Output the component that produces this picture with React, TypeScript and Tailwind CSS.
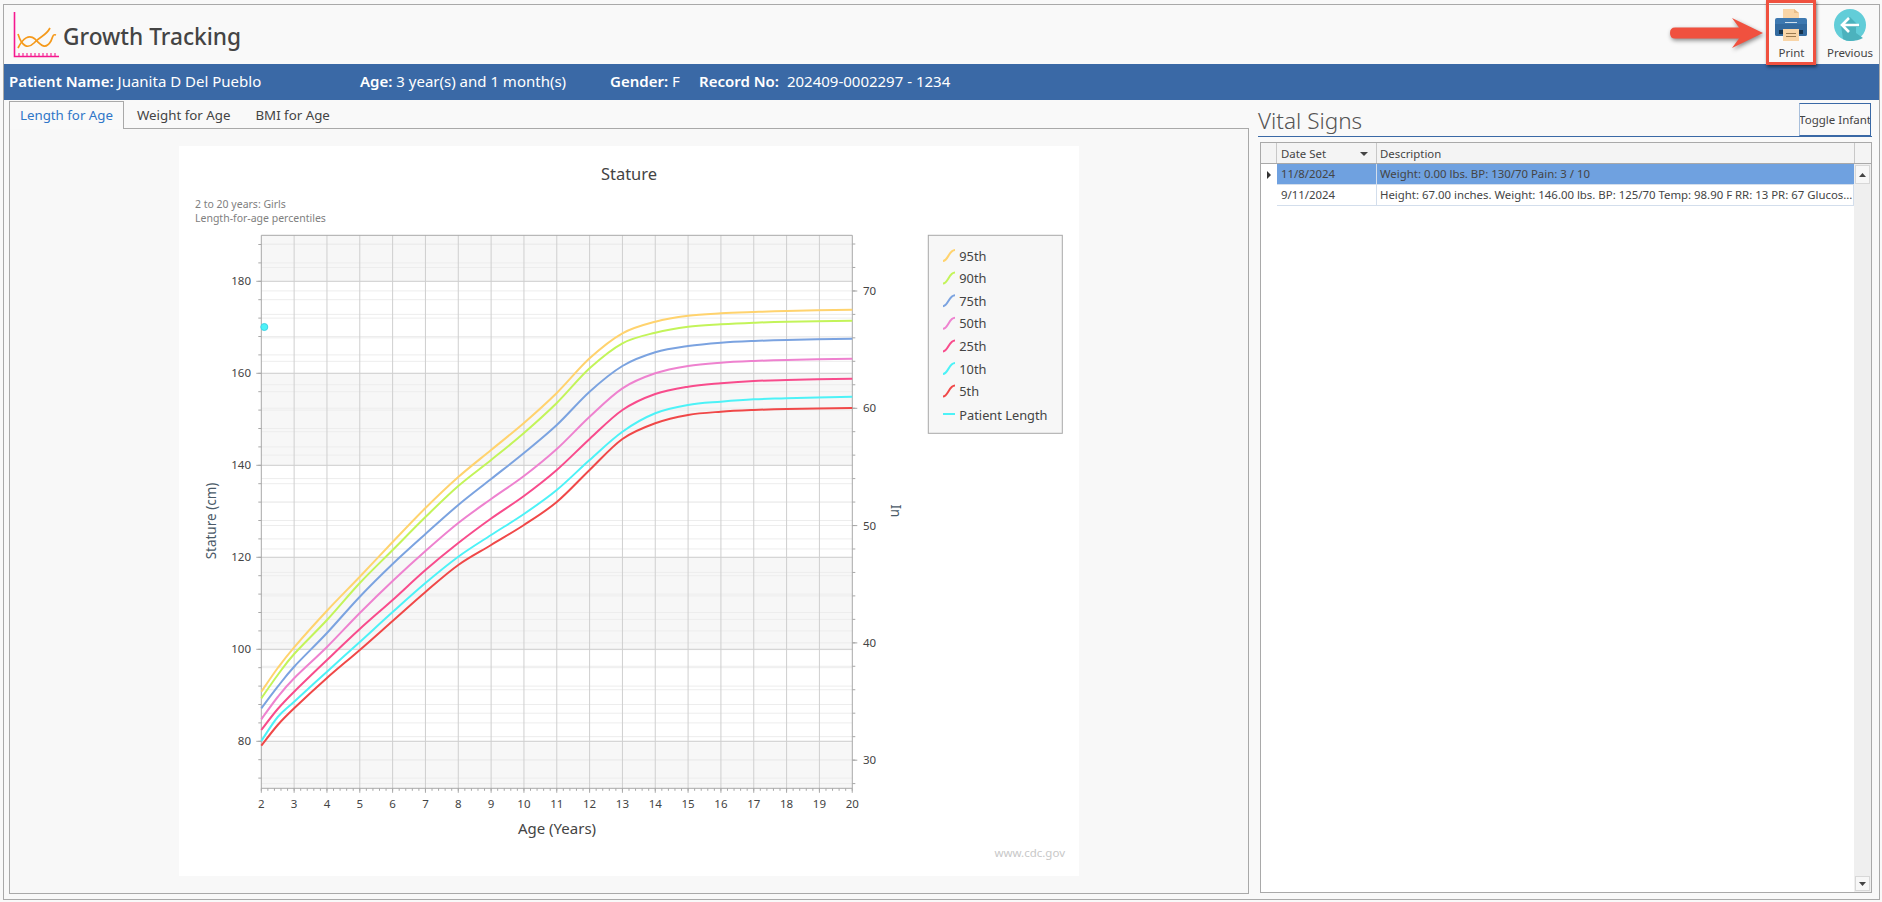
import React from "react";

const ages = [2, 2.5, 3, 4, 5, 6, 7, 8, 9, 10, 11, 12, 13, 14, 15, 16, 17, 18, 20];

const curves = [
  { name: "95th", color: "#ffd36e", ys: [691.7, 668, 647.3, 610.7, 576.7, 542, 508, 477, 450, 423, 393, 358.3, 333.3, 321.7, 315.7, 313.3, 312, 311, 309.7] },
  { name: "90th", color: "#c3f45a", ys: [698.3, 675, 654, 620, 583, 550, 517, 486, 460, 433, 403, 368.3, 343.3, 332.7, 326.7, 324.3, 322.7, 321.7, 320.7] },
  { name: "75th", color: "#7ba3e0", ys: [708.3, 686.7, 666.7, 633, 596.7, 564, 534, 505, 479, 453, 425, 391.7, 366, 352.3, 346, 342.7, 341, 340, 338.7] },
  { name: "50th", color: "#ee82cf", ys: [719.3, 697, 678.3, 647, 613, 581, 551, 523, 499, 476, 449, 416.7, 388.3, 373.3, 366, 362.7, 361, 360, 358.7] },
  { name: "25th", color: "#f84c8c", ys: [730, 709, 691.7, 660, 629, 600, 570, 543, 518.5, 496, 470, 439, 410, 394, 386.7, 383.3, 381, 380, 378.7] },
  { name: "10th", color: "#4df2f7", ys: [741, 717, 701.7, 671.7, 642, 612, 583, 556.7, 535, 514, 490, 460, 431.7, 413.3, 405, 401.7, 399.3, 398.3, 396.7] },
  { name: "5th", color: "#f04848", ys: [745.7, 725, 708.3, 678, 650, 621, 592, 565, 545, 525, 502, 470, 439, 423.3, 415, 411.7, 410, 409, 408] },
];

const ageX = (a: number) => 261.3 + 32.83 * (a - 2);
const cmY = (c: number) => 281.3 + (180 - c) * 4.6;
const inY = (i: number) => 291 + (70 - i) * 11.73;

const PLOT = { left: 261.3, right: 852.3, top: 235.3, bottom: 788.3 };

// catmull-rom so the percentile lines stay smooth between the few points
const smooth = (pts: number[][]) => {
  let d = `M${pts[0][0]} ${pts[0][1]}`;
  for (let i = 0; i < pts.length - 1; i++) {
    const p0 = pts[Math.max(i - 1, 0)];
    const p1 = pts[i];
    const p2 = pts[i + 1];
    const p3 = pts[Math.min(i + 2, pts.length - 1)];
    const c1x = p1[0] + (p2[0] - p0[0]) / 6;
    const c1y = p1[1] + (p2[1] - p0[1]) / 6;
    const c2x = p2[0] - (p3[0] - p1[0]) / 6;
    const c2y = p2[1] - (p3[1] - p1[1]) / 6;
    d += ` C${c1x} ${c1y} ${c2x} ${c2y} ${p2[0]} ${p2[1]}`;
  }
  return d;
};

const range = (from: number, to: number, step: number) => {
  const out: number[] = [];
  for (let v = from; v <= to + 0.001; v += step) out.push(v);
  return out;
};

const Logo = () => (
  <svg width="50" height="50" viewBox="0 0 50 50" fill="none">
    <path d="M1.5 0V44.5H46" stroke="#f5188f" strokeWidth="1.6" />
    {range(6, 44, 4).map((x) => (
      <path key={x} d={`M${x} 44V41`} stroke="#f5188f" strokeWidth="1.1" />
    ))}
    <path d="M5 22C9 35 15 37 21 31C27 24 33 24 37 16" stroke="#f59a1c" strokeWidth="1.7" />
    <path d="M5 36C10 26 16 22 22 27C27 32 32 39 38 29C40 24 40 22 43 23" stroke="#f59a1c" strokeWidth="1.7" />
  </svg>
);

const PrinterIcon = () => (
  <svg width="32" height="32" viewBox="0 0 32 32">
    <path d="M8 0H19L24 4V12H8Z" fill="#f9d5a7" />
    <path d="M19 0L24 4H19Z" fill="#e8bd88" />
    <path d="M2 9H30Q32 9 32 11V25Q32 27 30 27H2Q0 27 0 25V11Q0 9 2 9Z" fill="#3d78b0" />
    <path d="M0 15H32V25Q32 27 30 27H2Q0 27 0 25Z" fill="#336a9f" />
    <rect x="10" y="13" width="12" height="1" fill="#cfe0ee" />
    <rect x="4" y="21" width="24" height="4" fill="#16344f" />
    <rect x="8" y="20" width="16" height="12" fill="#f9d5a7" />
    <rect x="11" y="24" width="10" height="1" fill="#9a7a50" />
    <rect x="11" y="27" width="10" height="1" fill="#9a7a50" />
  </svg>
);

const PreviousIcon = () => (
  <svg width="32" height="32" viewBox="0 0 32 32">
    <circle cx="16" cy="16" r="16" fill="#62cdd8" />
    <path d="M16 8L26 18H22V24L29 29Q24 32 16 32Q12 32 9 30L7 16Z" fill="#4cb2bd" />
    <path d="M15 9L8 16L15 23M8 16H25" fill="none" stroke="#ffffff" strokeWidth="2.6" />
  </svg>
);

const Chart = () => {
  const leftMinor = range(244.5, PLOT.bottom, 18.4);
  const rightMinor = range(244, PLOT.bottom, 23.46);
  const bands = [
    [235.3, 281.3],
    [373.3, 465.3],
    [557.3, 650.3],
    [742.3, 788.3],
  ];
  return (
    <svg width="900" height="730" viewBox="179 146 900 730" className="block">
      {bands.map(([a, b]) => (
        <rect key={a} x={PLOT.left} y={a} width={PLOT.right - PLOT.left} height={b - a} fill="#f7f7f7" />
      ))}
      {[...leftMinor, ...rightMinor].map((y, i) => (
        <line key={i} x1={PLOT.left} x2={PLOT.right} y1={y} y2={y} stroke="#ededed" />
      ))}
      {range(80, 180, 20).map((c) => (
        <line key={c} x1={PLOT.left} x2={PLOT.right} y1={cmY(c)} y2={cmY(c)} stroke="#d0d0d0" />
      ))}
      {range(3, 19, 1).map((a) => (
        <line key={a} x1={ageX(a)} x2={ageX(a)} y1={PLOT.top} y2={PLOT.bottom} stroke="#cfcfcf" />
      ))}

      {/* axes */}
      <path d={`M${PLOT.left} ${PLOT.bottom}V${PLOT.top}H${PLOT.right}V${PLOT.bottom}H${PLOT.left}`} fill="none" stroke="#a8a8a8" />
      {leftMinor.map((y) => (
        <line key={y} x1={PLOT.left - 3} x2={PLOT.left} y1={y} y2={y} stroke="#a8a8a8" />
      ))}
      {range(80, 180, 20).map((c) => (
        <line key={c} x1={PLOT.left - 5} x2={PLOT.left} y1={cmY(c)} y2={cmY(c)} stroke="#a8a8a8" />
      ))}
      {rightMinor.map((y) => (
        <line key={y} x1={PLOT.right} x2={PLOT.right + 3} y1={y} y2={y} stroke="#a8a8a8" />
      ))}
      {range(30, 70, 10).map((i) => (
        <line key={i} x1={PLOT.right} x2={PLOT.right + 5} y1={inY(i)} y2={inY(i)} stroke="#a8a8a8" />
      ))}
      {range(2, 20, 0.2).map((a) => (
        <line key={a} x1={ageX(a)} x2={ageX(a)} y1={PLOT.bottom} y2={PLOT.bottom + 2.5} stroke="#a8a8a8" />
      ))}
      {range(2, 20, 1).map((a) => (
        <line key={a} x1={ageX(a)} x2={ageX(a)} y1={PLOT.bottom} y2={PLOT.bottom + 4.5} stroke="#a8a8a8" />
      ))}

      {curves.map((c) => (
        <path
          key={c.name}
          d={smooth(ages.map((a, i) => [ageX(a), c.ys[i]]))}
          fill="none"
          stroke={c.color}
          strokeWidth="2"
        />
      ))}
      <circle cx="264.3" cy="327" r="3.5" fill="#4df2f7" stroke="#3fd3e6" />

      {/* labels */}
      <text x="629" y="180" textAnchor="middle" fontSize="16.5" fill="#444444">Stature</text>
      <text x="195" y="208" fontSize="10.5" fill="#808080">2 to 20 years: Girls</text>
      <text x="195" y="222" fontSize="10.5" fill="#808080">Length-for-age percentiles</text>
      {range(80, 180, 20).map((c) => (
        <text key={c} x="251" y={cmY(c) + 4} textAnchor="end" fontSize="11.5" fill="#444444">{c}</text>
      ))}
      {range(30, 70, 10).map((i) => (
        <text key={i} x="863" y={inY(i) + 4} fontSize="11.5" fill="#444444">{i}</text>
      ))}
      {range(2, 20, 1).map((a) => (
        <text key={a} x={ageX(a)} y="807.5" textAnchor="middle" fontSize="11.5" fill="#444444">{a}</text>
      ))}
      <text x="557" y="834" textAnchor="middle" fontSize="15" fill="#444444">Age (Years)</text>
      <text transform="translate(216 521) rotate(-90)" textAnchor="middle" fontSize="13.5" fill="#4a5a68">Stature (cm)</text>
      <text transform="translate(891 511) rotate(90)" textAnchor="middle" fontSize="13.5" fill="#4a5a68">In</text>
      <text x="1065" y="857" textAnchor="end" fontSize="11.5" fill="#c8c8c8">www.cdc.gov</text>

      {/* legend */}
      <rect x="928.3" y="235.3" width="134" height="198" fill="#f7f7f7" stroke="#a8a8a8" />
      {curves.map((c, i) => {
        const y = 256 + i * 22.6;
        return (
          <g key={c.name}>
            <path d={`M943 ${y + 5}C948 ${y + 5} 949 ${y - 6} 955 ${y - 6}`} fill="none" stroke={c.color} strokeWidth="2" />
            <text x="959.3" y={y + 4.5} fontSize="12.8" fill="#444444">{c.name}</text>
          </g>
        );
      })}
      <line x1="943" x2="955" y1="414" y2="414" stroke="#4df2f7" strokeWidth="2" />
      <text x="959.3" y="419.5" fontSize="12.8" fill="#444444">Patient Length</text>
    </svg>
  );
};

const vitals = [
  { date: "11/8/2024", text: "Weight: 0.00 lbs. BP: 130/70 Pain: 3 / 10", selected: true },
  { date: "9/11/2024", text: "Height: 67.00 inches. Weight: 146.00 lbs. BP: 125/70 Temp: 98.90 F RR: 13 PR: 67 Glucos...", selected: false },
];

export default function App() {
  return (
    <div className="w-[1882px] h-[902px] overflow-hidden bg-[#f9f9f9] pt-[4px] pl-[3px] pr-[2px] pb-[2px] [font-family:'Noto_Sans',sans-serif] text-[#444444]">
      <div className="h-full flex flex-col border border-[#a9a9a9]">
        {/* header */}
        <div className="h-[59px] flex items-start justify-between shrink-0">
          <div className="flex items-start pl-[9px] pt-[7px]">
            <Logo />
            <span className="mt-[9px] text-[22.7px] leading-[32px] font-medium text-[#444444]">Growth Tracking</span>
          </div>
          <div className="flex items-start pr-[6px] pt-[4px]">
            <div className="relative w-[48px] flex flex-col items-center">
              <PrinterIcon />
              <span className="text-[11.5px] leading-[16px] mt-[4px] ml-[1px]">Print</span>
              {/* annotation added on top of the screenshot */}
              <div className="absolute left-[-1px] top-[-9px] w-[50px] h-[65px] border-[3px] border-[#f0513f] shadow-[1px_2px_3px_rgba(0,0,0,0.5)]" />
              <svg className="absolute left-[-98px] top-[8px] drop-shadow-[1px_2px_2px_rgba(0,0,0,0.45)]" width="96" height="36" viewBox="0 0 96 36">
                <path d="M6 10.5H70L63 1L94 16L63 31L70 21.5H6Q1 21.5 1 16Q1 10.5 6 10.5Z" fill="#f0513f" />
              </svg>
            </div>
            <div className="ml-[12px] w-[46px] flex flex-col items-center">
              <PreviousIcon />
              <span className="text-[11.5px] leading-[16px] mt-[4px]">Previous</span>
            </div>
          </div>
        </div>

        {/* patient band */}
        <div className="h-[36px] shrink-0 bg-[#3a69a6] text-white flex items-center pl-[5px] pb-[1px] text-[15px] whitespace-nowrap">
          <div className="w-[351px]"><b className="font-semibold">Patient Name:</b> Juanita D Del Pueblo</div>
          <div className="w-[250px]"><b className="font-semibold">Age:</b> 3 year(s) and 1 month(s)</div>
          <div className="w-[89px]"><b className="font-semibold">Gender:</b> F</div>
          <div><b className="font-semibold">Record No:</b> <span className="ml-[4px]">202409-0002297 - 1234</span></div>
        </div>

        {/* body */}
        <div className="flex-1 min-h-0 flex pl-[5px] pt-[1px] pb-[5px]">
          <div className="w-[1240px] flex flex-col">
            <div className="h-[28px] flex text-[13.3px] shrink-0">
              <div className="w-[115px] h-[28px] pt-[1px] relative z-10 border border-b-0 border-[#a9a9a9] bg-[#f9f9f9] text-[#2f76c8] flex items-center justify-center">Length for Age</div>
              <div className="ml-[13px] pt-[1px] flex items-center">Weight for Age</div>
              <div className="ml-[25px] pt-[1px] flex items-center">BMI for Age</div>
            </div>
            <div className="flex-1 min-h-0 -mt-px border border-[#a9a9a9] bg-[#f8f8f8] flex justify-center pt-[17px]">
              <div className="w-[900px] h-[730px] bg-white">
                <Chart />
              </div>
            </div>
          </div>

          <div className="ml-[9px] w-[614px] flex flex-col">
            <div className="h-[36px] shrink-0 flex justify-between border-b border-[#3a69a6]">
              <span className="pt-[2px] text-[22.5px] leading-[36px] font-light text-[#555555]">Vital Signs</span>
              <div className="w-[72px] h-[33px] mt-[2px] mr-[1px] border border-[#3a69a6] border-l-[#a9c0dc] flex items-center justify-center overflow-hidden text-[11.5px] whitespace-nowrap">Toggle Infant</div>
            </div>
            <div className="flex-1 min-h-0 mt-[5px] ml-[2px] border border-[#a9a9a9] bg-white flex flex-col text-[11.4px] mb-[1px]">
              <div className="h-[21px] shrink-0 flex bg-[#f4f4f4] border-b border-[#a9a9a9]">
                <div className="w-[16px] border-r border-[#c8c8c8]" />
                <div className="w-[100px] pt-[1px] border-r border-[#c8c8c8] flex items-center justify-between pl-[4px] pr-[8px]">
                  <span>Date Set</span>
                  <svg width="8" height="4" viewBox="0 0 8 4"><path d="M0 0H8L4 4Z" fill="#444444" /></svg>
                </div>
                <div className="w-[478px] pt-[1px] border-r border-[#c8c8c8] flex items-center pl-[3px]">Description</div>
              </div>
              <div className="flex-1 min-h-0 flex">
                <div className="flex-1 min-w-0">
                  {vitals.map((v) => (
                    <div key={v.date} className="h-[21px] flex whitespace-nowrap">
                      <div className="w-[16px] flex items-center justify-center">
                        {v.selected && (
                          <svg width="4" height="8" viewBox="0 0 4 8"><path d="M0 0L4 4L0 8Z" fill="#333333" /></svg>
                        )}
                      </div>
                      <div className={`w-[100px] flex items-center pl-[4px] border-b border-r border-[#d3deec] ${v.selected ? "bg-[#6fa1e0]" : ""}`}>{v.date}</div>
                      <div className={`flex-1 min-w-0 flex items-center pl-[3px] border-b border-[#d3deec] ${v.selected ? "bg-[#6fa1e0]" : "border-r"}`}>{v.text}</div>
                    </div>
                  ))}
                </div>
                <div className="w-[17px] shrink-0 bg-[#efefef] flex flex-col justify-between items-center py-[1px]">
                  <div className="w-[15px] h-[19px] bg-[#f7f7f7] border border-[#d8d8d8] flex items-center justify-center">
                    <svg width="7" height="4" viewBox="0 0 7 4"><path d="M3.5 0L7 4H0Z" fill="#444444" /></svg>
                  </div>
                  <div className="w-[15px] h-[15px] bg-[#f7f7f7] border border-[#d8d8d8] flex items-center justify-center">
                    <svg width="7" height="4" viewBox="0 0 7 4"><path d="M0 0H7L3.5 4Z" fill="#444444" /></svg>
                  </div>
                </div>
              </div>
            </div>
          </div>
        </div>
      </div>
    </div>
  );
}
